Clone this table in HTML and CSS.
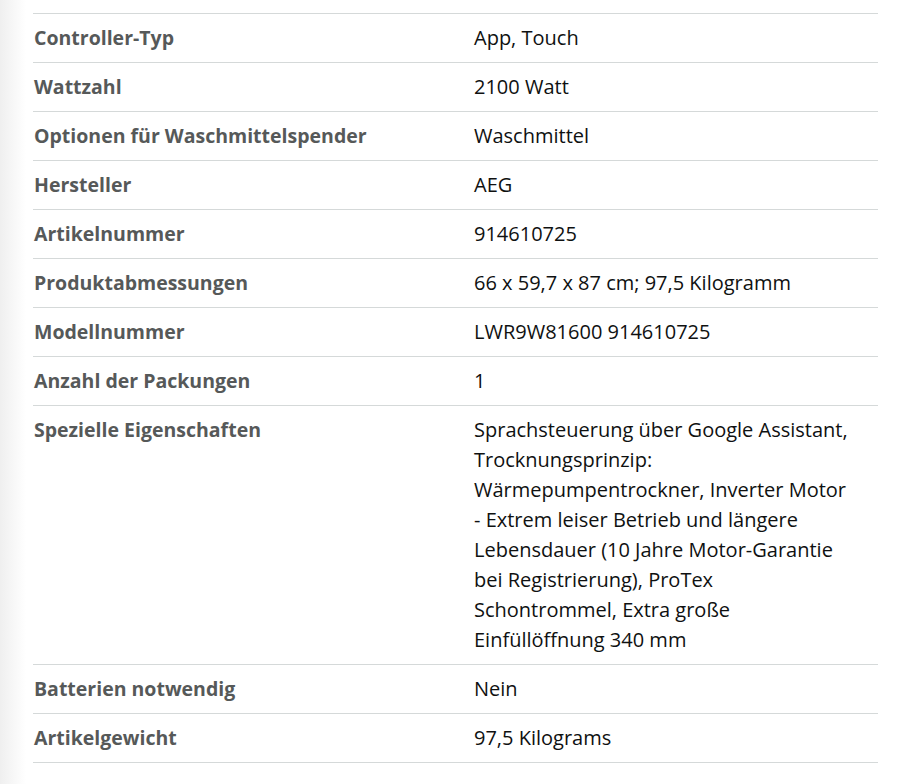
FILE: index.html
```html
<!DOCTYPE html>
<html lang="de">
<head>
<meta charset="utf-8">
<link rel="stylesheet" href="styles.css">
</head>
<body>
<div class="page">
<table class="specs">
<tbody>
<tr><th>Controller-Typ</th><td>App, Touch</td></tr>
<tr><th>Wattzahl</th><td>2100 Watt</td></tr>
<tr><th>Optionen für Waschmittelspender</th><td>Waschmittel</td></tr>
<tr><th>Hersteller</th><td>AEG</td></tr>
<tr><th>Artikelnummer</th><td>914610725</td></tr>
<tr><th>Produktabmessungen</th><td>66 x 59,7 x 87 cm; 97,5 Kilogramm</td></tr>
<tr><th>Modellnummer</th><td>LWR9W81600 914610725</td></tr>
<tr><th>Anzahl der Packungen</th><td>1</td></tr>
<tr><th>Spezielle Eigenschaften</th><td>Sprachsteuerung über Google Assistant, Trocknungsprinzip: Wärmepumpentrockner, Inverter Motor - Extrem leiser Betrieb und längere Lebensdauer (10 Jahre Motor-Garantie bei Registrierung), ProTex Schontrommel, Extra große Einfüllöffnung 340 mm</td></tr>
<tr><th>Batterien notwendig</th><td>Nein</td></tr>
<tr><th>Artikelgewicht</th><td>97,5 Kilograms</td></tr>
</tbody>
</table>
</div>
</body>
</html>
```
FILE: styles.css
```css
html, body {
  margin: 0;
  padding: 0;
}
body {
  background: linear-gradient(to right, #efefef 0px, #ffffff 26px) no-repeat;
  background-color: #fff;
  min-height: 784px;
  font-family: "Open Sans", "Noto Sans", sans-serif;
  font-size: 20px;
}
.page {
  padding: 13px 38px 0 33px;
}
.specs {
  width: 845px;
  border-collapse: collapse;
  table-layout: fixed;
}
.specs tr {
  border-top: 1px solid #d5d9d9;
  border-bottom: 1px solid #d5d9d9;
}
.specs th,
.specs td {
  vertical-align: top;
  text-align: left;
  line-height: 30px;
  padding: 9px 0;
}
.specs th {
  width: 440px;
  font-size: 19.5px;
  font-weight: 700;
  color: #565959;
  padding-left: 1px;
  padding-right: 0;
}
.specs td {
  color: #0f1111;
  padding-right: 25px;
}
```
